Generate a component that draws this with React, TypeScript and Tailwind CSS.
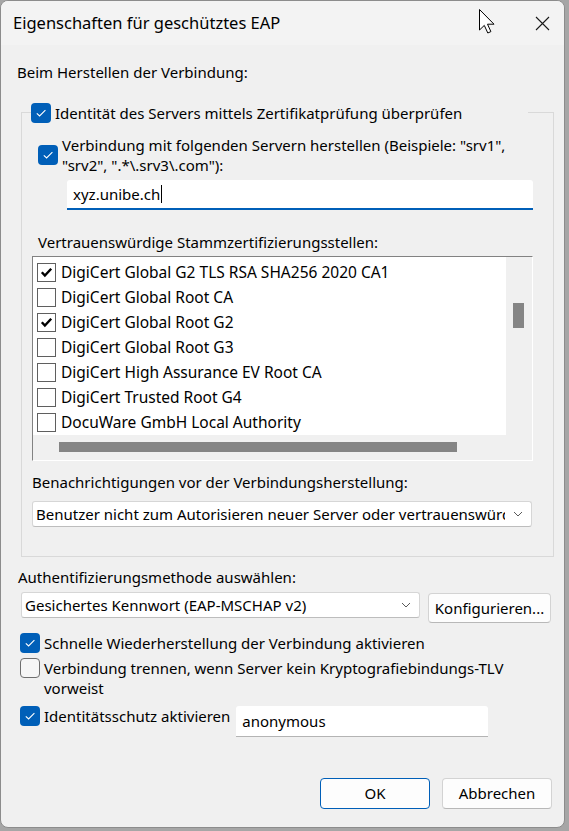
import React from 'react';

const certificates = [
  { name: 'DigiCert Global G2 TLS RSA SHA256 2020 CA1', checked: true },
  { name: 'DigiCert Global Root CA', checked: false },
  { name: 'DigiCert Global Root G2', checked: true },
  { name: 'DigiCert Global Root G3', checked: false },
  { name: 'DigiCert High Assurance EV Root CA', checked: false },
  { name: 'DigiCert Trusted Root G4', checked: false },
  { name: 'DocuWare GmbH Local Authority', checked: false },
];

// Windows 11 style checkbox
function Checkbox({ checked }: { checked: boolean }) {
  if (!checked) {
    return <span className="block w-[20px] h-[20px] shrink-0 rounded-[4px] border border-[#6f6f6f] bg-[#f6f6f6]" />;
  }
  return (
    <span className="flex w-[20px] h-[20px] shrink-0 items-center justify-center rounded-[4px] bg-[#005fb8]">
      <svg width="12" height="10" viewBox="0 0 12 10">
        <path d="M1.8 5.3 L4.6 8 L10.4 2.2" fill="none" stroke="#ffffff" strokeWidth="1.1" />
      </svg>
    </span>
  );
}

// classic checkbox used inside the list view
function ListCheckbox({ checked }: { checked: boolean }) {
  return (
    <span className="flex w-[19px] h-[19px] shrink-0 items-center justify-center border border-[#5f5f5f] bg-white">
      {checked && (
        <svg width="13" height="11" viewBox="0 0 13 11">
          <path d="M1.8 5.2 L4.9 8.6 L11.2 1.8" fill="none" stroke="#000000" strokeWidth="2.4" />
        </svg>
      )}
    </span>
  );
}

function Chevron() {
  return (
    <svg width="10" height="6" viewBox="0 0 10 6" className="shrink-0">
      <path d="M1 1 L5 5 L9 1" fill="none" stroke="#5a5a5a" strokeWidth="1" />
    </svg>
  );
}

export default function App() {
  return (
    <div className="w-[569px] h-[831px] bg-[#a6a6a6] font-['Noto_Sans',sans-serif] text-[15px] text-black">
      <div className="relative w-[565px] h-[828px] rounded-[8px] border border-[#8c8c8c] bg-[#f0f0f0] overflow-hidden flex flex-col">
        {/* title bar */}
        <div className="h-[44px] shrink-0 bg-[#f3f3f3] flex items-center justify-between pl-[12px] pr-[14px]">
          <span className="text-[16.5px] mt-[1px]">Eigenschaften für geschütztes EAP</span>
          <svg width="15" height="15" viewBox="0 0 15 15" className="mt-[1px]">
            <path d="M1 1 L14 14 M14 1 L1 14" stroke="#1a1a1a" strokeWidth="1.1" />
          </svg>
        </div>

        {/* mouse pointer over the title bar */}
        <svg width="20" height="27" viewBox="0 0 20 27" className="absolute left-[477px] top-[7px]">
          <path d="M1.5 1.5 L1.5 22 L6.3 17.4 L9.8 25 L12.9 23.6 L9.5 16.2 L16 16.2 Z" fill="#ffffff" stroke="#000000" strokeWidth="1" strokeLinejoin="round" />
        </svg>

        <div className="flex flex-col flex-1 pl-[16px] pr-[12px]">
          <p className="mt-[17px] leading-[20px]">Beim Herstellen der Verbindung:</p>

          {/* group box */}
          <div className="mt-[30px] ml-[4px] w-[533px] h-[445px] border border-[#d9d9d9] flex flex-col">
            <div className="-mt-[10px] ml-[9px] w-[497px] h-[20px] bg-[#f0f0f0] flex items-center gap-[4px]">
              <Checkbox checked />
              <span className="leading-[20px] whitespace-nowrap">Identität des Servers mittels Zertifikatprüfung überprüfen</span>
            </div>

            <div className="mt-[12px] ml-[16px] flex items-center gap-[4px]">
              <Checkbox checked />
              <p className="leading-[20px] whitespace-nowrap">
                Verbindung mit folgenden Servern herstellen (Beispiele: "srv1",
                <br />
                "srv2", ".*\.srv3\.com"):
              </p>
            </div>

            <div className="mt-[5px] ml-[45px] w-[466px] h-[30px] bg-white rounded-t-[3px] border-b-2 border-[#005fb8] flex items-center pl-[6px]">
              <span>xyz.unibe.ch</span>
              <span className="ml-[1px] w-px h-[18px] bg-black" />
            </div>

            <p className="mt-[22px] ml-[16px] leading-[20px]">Vertrauenswürdige Stammzertifizierungsstellen:</p>

            {/* certificate list */}
            <div className="mt-[4px] ml-[10px] w-[501px] h-[205px] border border-t-[#828282] border-l-[#828282] border-r-white border-b-white flex flex-col">
              <div className="flex h-[178px]">
                <div className="w-[473px] bg-white pt-[3px] flex flex-col text-[15.5px]">
                  {certificates.map((c) => (
                    <div key={c.name} className="h-[25px] flex items-center gap-[5px] pl-[4px]">
                      <ListCheckbox checked={c.checked} />
                      <span className="whitespace-nowrap">{c.name}</span>
                    </div>
                  ))}
                </div>
                <div className="w-[26px] bg-[#f0f0f0] pt-[46px] pl-[7px]">
                  <div className="w-[11px] h-[25px] bg-[#858585]" />
                </div>
              </div>
              <div className="h-[25px] bg-[#f0f0f0] pt-[7px] pl-[26px]">
                <div className="w-[398px] h-[10px] bg-[#858585]" />
              </div>
            </div>

            <p className="mt-[11px] ml-[10px] leading-[20px]">Benachrichtigungen vor der Verbindungsherstellung:</p>

            <div className="mt-[9px] ml-[10px] w-[500px] h-[26px] bg-white border border-[#d6d6d6] border-b-[#bdbdbd] rounded-[3px] flex items-center gap-[8px] pl-[3px] pr-[8px]">
              <span className="flex-1 whitespace-nowrap overflow-hidden">Benutzer nicht zum Autorisieren neuer Server oder vertrauenswürdiger</span>
              <Chevron />
            </div>
          </div>

          <p className="mt-[10px] ml-[1px] leading-[20px]">Authentifizierungsmethode auswählen:</p>

          <div className="mt-[5px] flex items-start">
            <div className="ml-[4px] w-[399px] h-[26px] bg-white border border-[#d6d6d6] border-b-[#bdbdbd] rounded-[3px] flex items-center justify-between pl-[3px] pr-[8px]">
              <span>Gesichertes Kennwort (EAP-MSCHAP v2)</span>
              <Chevron />
            </div>
            <button className="ml-[8px] mt-[1px] w-[123px] h-[30px] bg-[#fdfdfd] border border-[#d3d3d3] border-b-[#b8b8b8] rounded-[4px]">
              Konfigurieren...
            </button>
          </div>

          <div className="mt-[10px] ml-[3px] flex items-center gap-[4px]">
            <Checkbox checked />
            <span className="leading-[20px]">Schnelle Wiederherstellung der Verbindung aktivieren</span>
          </div>

          <div className="mt-[5px] ml-[3px] flex items-start gap-[4px]">
            <Checkbox checked={false} />
            <p className="leading-[20px]">
              Verbindung trennen, wenn Server kein Kryptografiebindungs-TLV
              <br />
              vorweist
            </p>
          </div>

          <div className="mt-[8px] ml-[3px] flex items-start">
            <div className="flex items-center gap-[4px] h-[20px]">
              <Checkbox checked />
              <span className="leading-[20px]">Identitätsschutz aktivieren</span>
            </div>
            <div className="ml-[6px] w-[252px] h-[31px] bg-white rounded-t-[3px] border-b border-[#b4b4b4] flex items-center pl-[6px]">
              anonymous
            </div>
          </div>

          <div className="mt-[41px] flex justify-end gap-[12px]">
            <button className="w-[110px] h-[31px] bg-[#fdfdfd] border border-[#005fb8] rounded-[4px]">OK</button>
            <button className="w-[110px] h-[31px] bg-[#fdfdfd] border border-[#d3d3d3] border-b-[#b8b8b8] rounded-[4px]">Abbrechen</button>
          </div>
        </div>
      </div>
    </div>
  );
}
